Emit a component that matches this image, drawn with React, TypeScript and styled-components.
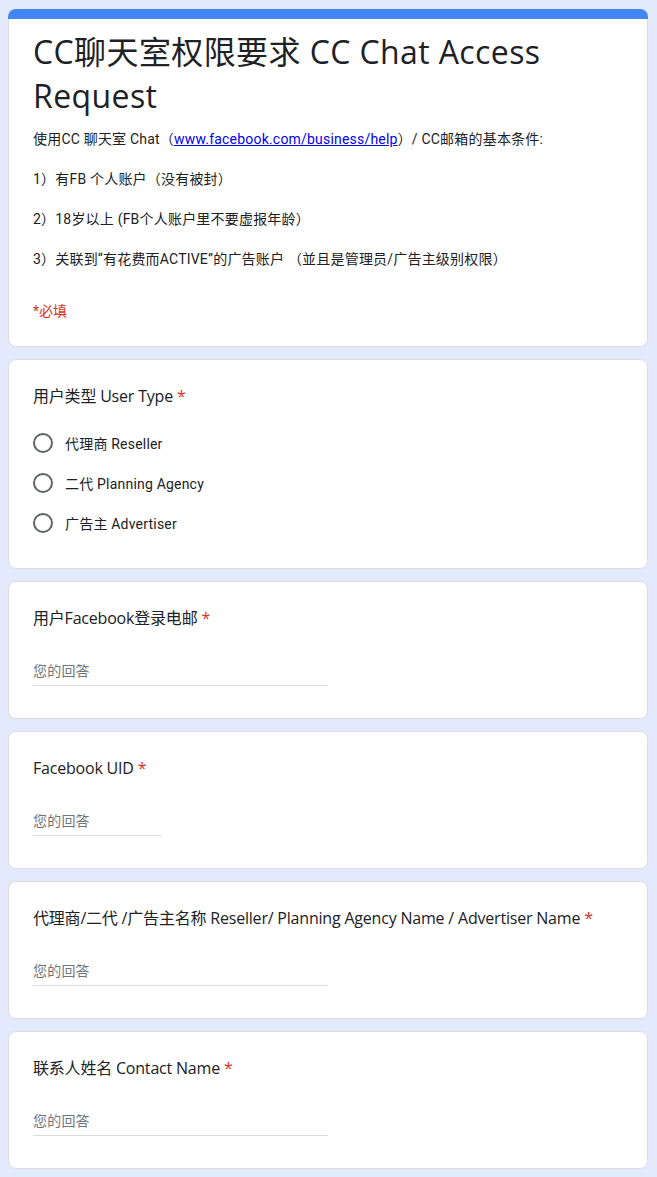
import React from "react";
import styled, { createGlobalStyle } from "styled-components";

const GlobalStyle = createGlobalStyle`
  html, body {
    margin: 0;
    padding: 0;
    background: #e2eafc;
  }
  * { box-sizing: border-box; }
`;

const SANS = `"Open Sans", "Noto Sans CJK SC", sans-serif`;
const BODY = `Roboto, "Noto Sans CJK SC", sans-serif`;

const Page = styled.main`
  padding: 9px 9px 24px 8px;
  display: flex;
  flex-direction: column;
  gap: 12px;
`;

const HeaderWrap = styled.section`
  display: flex;
  flex-direction: column;
`;

const Band = styled.div`
  height: 10px;
  background: #4285f4;
  border-radius: 8px 8px 0 0;
`;

const HeaderBody = styled.div`
  background: #fff;
  border: 1px solid #dadce0;
  border-top: none;
  border-radius: 0 0 8px 8px;
  padding: 11px 24px 25px;
`;

const Title = styled.h1`
  margin: 0;
  font-family: ${SANS};
  font-weight: 400;
  font-size: 32px;
  line-height: 44px;
  letter-spacing: 0.4px;
  color: #202124;
`;

const Desc = styled.div`
  margin-top: 11px;
  font-family: ${BODY};
  font-size: 14px;
  line-height: 20px;
  letter-spacing: 0.2px;
  color: #202124;
  display: flex;
  flex-direction: column;
  gap: 20px;
`;

const Link = styled.a`
  color: #0000ee;
  text-decoration: underline;
`;

const Required = styled.div`
  margin-top: 32px;
  font-family: ${BODY};
  font-size: 14px;
  line-height: 20px;
  color: #d93025;
`;

const Card = styled.section<{ $padBottom?: number }>`
  background: #fff;
  border: 1px solid #dadce0;
  border-radius: 8px;
  padding: 24px 24px ${(p) => p.$padBottom ?? 24}px;
`;

const QTitle = styled.div`
  font-family: ${SANS};
  font-size: 16px;
  line-height: 24px;
  letter-spacing: -0.2px;
  color: #202124;
`;

const Star = styled.span`
  color: #d93025;
  padding-left: 4px;
`;

const Options = styled.div`
  margin-top: 15px;
  display: flex;
  flex-direction: column;
`;

const Option = styled.label`
  height: 40px;
  display: flex;
  align-items: center;
  gap: 12px;
  font-family: ${BODY};
  font-size: 14px;
  color: #202124;
  letter-spacing: 0.2px;
`;

const Radio = styled.span`
  width: 20px;
  height: 20px;
  border-radius: 50%;
  border: 2px solid #5f6368;
  flex: none;
`;

const AnswerWrap = styled.div`
  margin-top: 29px;
  padding-bottom: 8px;
`;

const Answer = styled.input<{ $w: string }>`
  display: block;
  width: ${(p) => p.$w};
  border: none;
  border-bottom: 1px solid #dadce0;
  padding: 0 0 3px;
  height: 27px;
  line-height: 24px;
  font-family: ${BODY};
  font-size: 14px;
  letter-spacing: 0.2px;
  color: #202124;
  background: transparent;
  outline: none;
  &::placeholder {
    color: #70757a;
  }
`;

const TextQuestion: React.FC<{ title: string; width?: string }> = ({
  title,
  width = "50%",
}) => (
  <Card>
    <QTitle>
      {title}
      <Star>*</Star>
    </QTitle>
    <AnswerWrap>
      <Answer $w={width} placeholder="您的回答" />
    </AnswerWrap>
  </Card>
);

export default function App() {
  return (
    <>
      <GlobalStyle />
      <Page>
        <HeaderWrap>
          <Band />
          <HeaderBody>
            <Title>CC聊天室权限要求 CC Chat Access Request</Title>
            <Desc>
              <div>
                使用CC 聊天室 Chat（
                <Link href="#">www.facebook.com/business/help</Link>）/
                CC邮箱的基本条件:
              </div>
              <div>1）有FB 个人账户（没有被封）</div>
              <div>2）18岁以上 (FB个人账户里不要虚报年龄）</div>
              <div>3）关联到“有花费而ACTIVE”的广告账户 （並且是管理员/广告主级别权限）</div>
            </Desc>
            <Required>*必填</Required>
          </HeaderBody>
        </HeaderWrap>

        <Card $padBottom={25}>
          <QTitle>
            用户类型 User Type<Star>*</Star>
          </QTitle>
          <Options>
            {["代理商 Reseller", "二代 Planning Agency", "广告主 Advertiser"].map(
              (o) => (
                <Option key={o}>
                  <Radio />
                  {o}
                </Option>
              )
            )}
          </Options>
        </Card>

        <TextQuestion title="用户Facebook登录电邮" />
        <TextQuestion title="Facebook UID" width="128px" />
        <TextQuestion title="代理商/二代 /广告主名称 Reseller/ Planning Agency Name / Advertiser Name" />
        <TextQuestion title="联系人姓名 Contact Name" />
      </Page>
    </>
  );
}
